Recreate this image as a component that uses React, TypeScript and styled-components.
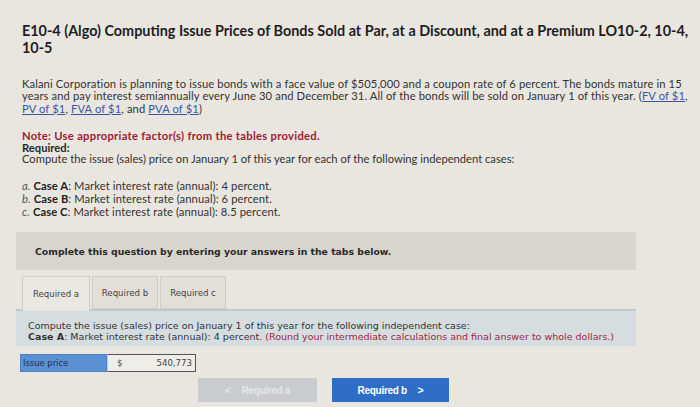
import React from "react";
import styled, { createGlobalStyle } from "styled-components";

const GlobalStyle = createGlobalStyle`
  html, body {
    margin: 0;
    padding: 0;
    background: #e9e6df;
  }
  body {
    width: 700px;
    height: 407px;
    overflow: hidden;
  }
`;

const Page = styled.div`
  padding: 22px 0 0 22px;
  color: #2a2a2a;
  font-family: Lato, "Open Sans", "Liberation Sans", sans-serif;
`;

const Title = styled.h1`
  margin: 0;
  font-size: 14.4px;
  font-weight: 700;
  line-height: 17px;
  color: #1e1e1e;
`;

const Line = styled.div`
  white-space: nowrap;
`;

const Paragraph = styled.div`
  margin-top: 22px;
  font-size: 11.2px;
  line-height: 12.3px;
  letter-spacing: 0.12px;
  color: #333;
`;

const FactorLink = styled.a`
  color: #3a55a5;
  text-decoration: underline;
`;

const Block = styled.div`
  margin-top: 15px;
  font-size: 11.2px;
  line-height: 11.8px;
  color: #333;
`;

const Note = styled.div`
  color: #9e1b32;
  font-weight: 700;
  letter-spacing: 0.3px;
`;

const Strong = styled.div`
  font-weight: 700;
  color: #2a2a2a;
`;

const CaseList = styled.div`
  margin-top: 14px;
  font-size: 11.2px;
  line-height: 13px;
  letter-spacing: 0.1px;
  color: #333;
`;

const CaseLetter = styled.i`
  color: #555;
`;

const Bold = styled.b`
  font-weight: 700;
  color: #222;
`;

const Workspace = styled.div`
  margin: 14px 0 0 -6px;
  width: 620px;
  font-family: "DejaVu Sans", Verdana, sans-serif;
`;

const Banner = styled.div`
  background: #d8d5cf;
  height: 38px;
  display: flex;
  align-items: center;
  padding-left: 19px;
  font-size: 9.3px;
  font-weight: 700;
  color: #2a2a2a;
`;

const Tabs = styled.div`
  display: flex;
  gap: 2px;
  margin: 6px 0 0 6px;
`;

const Tab = styled.div<{ $active?: boolean }>`
  width: ${(p) => (p.$active ? 68 : 66)}px;
  height: ${(p) => (p.$active ? 35 : 33)}px;
  box-sizing: border-box;
  border: 1px solid #cfccc5;
  border-bottom: ${(p) => (p.$active ? "none" : "1px solid #cfccc5")};
  background: ${(p) => (p.$active ? "#ebe8e2" : "#e2dfd8")};
  display: flex;
  align-items: center;
  justify-content: center;
  font-size: 8.6px;
  color: #444;
  margin-bottom: ${(p) => (p.$active ? -2 : 0)}px;
  position: relative;
  z-index: 1;
`;

const Panel = styled.div`
  background: #d5dde0;
  border-top: 2px solid #c2c8cb;
  height: 37px;
  box-sizing: border-box;
  padding: 9px 0 0 12px;
  font-size: 9.5px;
  line-height: 11px;
  color: #333;
  white-space: nowrap;
`;

const RedNote = styled.span`
  color: #a0263f;
`;

const AnswerRow = styled.div`
  display: flex;
  margin: 8px 0 0 4px;
`;

const AnswerLabel = styled.div`
  width: 87px;
  height: 18px;
  box-sizing: border-box;
  background: #5b90d2;
  border: 1px solid #4f7fbf;
  font-size: 8.4px;
  color: #1f2f4a;
  display: flex;
  align-items: center;
  padding-left: 2px;
`;

const AnswerInput = styled.div`
  width: 89px;
  height: 18px;
  box-sizing: border-box;
  background: #efede8;
  border: 1px solid #555;
  border-left: 1px solid #cfccc5;
  display: flex;
  align-items: center;
  justify-content: space-between;
  padding: 0 3px 0 9px;
  font-size: 8.6px;
  color: #444;
`;

const NavRow = styled.div`
  display: flex;
  gap: 15px;
  margin: 6px 0 0 182px;
`;

const NavButton = styled.div<{ $primary?: boolean }>`
  width: ${(p) => (p.$primary ? 117 : 119)}px;
  height: 24px;
  display: flex;
  align-items: center;
  justify-content: center;
  gap: 11px;
  font-family: "Liberation Sans", Arial, sans-serif;
  font-size: 10px;
  font-weight: 700;
  letter-spacing: -0.3px;
  background: ${(p) => (p.$primary ? "#2f6ec6" : "#c9ccce")};
  color: ${(p) => (p.$primary ? "#ffffff" : "#e4e6e8")};
`;

export default function App() {
  return (
    <>
      <GlobalStyle />
      <Page>
        <Title>
          <Line>E10-4 (Algo) Computing Issue Prices of Bonds Sold at Par, at a Discount, and at a Premium LO10-2, 10-4,</Line>
          <Line>10-5</Line>
        </Title>
        <Paragraph>
          <Line>
            Kalani Corporation is planning to issue bonds with a face value of $505,000 and a coupon rate of 6 percent. The bonds mature in 15
          </Line>
          <Line>
            years and pay interest semiannually every June 30 and December 31. All of the bonds will be sold on January 1 of this year. (
            <FactorLink>FV of $1</FactorLink>,
          </Line>
          <Line>
            <FactorLink>PV of $1</FactorLink>, <FactorLink>FVA of $1</FactorLink>, and <FactorLink>PVA of $1</FactorLink>)
          </Line>
        </Paragraph>
        <Block>
          <Note>Note: Use appropriate factor(s) from the tables provided.</Note>
          <Strong>Required:</Strong>
          <div>Compute the issue (sales) price on January 1 of this year for each of the following independent cases:</div>
        </Block>
        <CaseList>
          <div>
            <CaseLetter>a.</CaseLetter> <Bold>Case A</Bold>: Market interest rate (annual): 4 percent.
          </div>
          <div>
            <CaseLetter>b.</CaseLetter> <Bold>Case B</Bold>: Market interest rate (annual): 6 percent.
          </div>
          <div>
            <CaseLetter>c.</CaseLetter> <Bold>Case C</Bold>: Market interest rate (annual): 8.5 percent.
          </div>
        </CaseList>
        <Workspace>
          <Banner>Complete this question by entering your answers in the tabs below.</Banner>
          <Tabs>
            <Tab $active>Required a</Tab>
            <Tab>Required b</Tab>
            <Tab>Required c</Tab>
          </Tabs>
          <Panel>
            <div>Compute the issue (sales) price on January 1 of this year for the following independent case:</div>
            <div>
              <b>Case A</b>: Market interest rate (annual): 4 percent.{" "}
              <RedNote>(Round your intermediate calculations and final answer to whole dollars.)</RedNote>
            </div>
          </Panel>
          <AnswerRow>
            <AnswerLabel>Issue price</AnswerLabel>
            <AnswerInput>
              <span>$</span>
              <span>540,773</span>
            </AnswerInput>
          </AnswerRow>
          <NavRow>
            <NavButton>
              <span>&lt;</span>
              <span>Required a</span>
            </NavButton>
            <NavButton $primary>
              <span>Required b</span>
              <span>&gt;</span>
            </NavButton>
          </NavRow>
        </Workspace>
      </Page>
    </>
  );
}
